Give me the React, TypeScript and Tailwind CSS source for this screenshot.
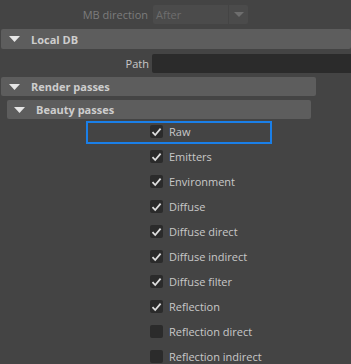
import React from "react";

const Tri = () => (
  <svg width="11" height="6" viewBox="0 0 11 6" className="shrink-0">
    <polygon points="0,0 11,0 5.5,6" fill="#e6e6e6" />
  </svg>
);

const Check = ({ on }: { on: boolean }) => (
  <div className="w-[13px] h-[13px] rounded-[2px] bg-[#2b2b2b] flex items-center justify-center shrink-0">
    {on && (
      <svg width="11" height="10" viewBox="0 0 11 10">
        <path d="M1.5 5.2 L4.2 8 L9.6 1.6" stroke="#e0e0e0" strokeWidth="1.8" fill="none" />
      </svg>
    )}
  </div>
);

const items: [string, boolean][] = [
  ["Raw", true],
  ["Emitters", true],
  ["Environment", true],
  ["Diffuse", true],
  ["Diffuse direct", true],
  ["Diffuse indirect", true],
  ["Diffuse filter", true],
  ["Reflection", true],
  ["Reflection direct", false],
  ["Reflection indirect", false],
];

export default function App() {
  return (
    <div
      className="w-[351px] h-[364px] overflow-hidden bg-[#444444] text-[11px] leading-none"
      style={{ fontFamily: '"Open Sans", "DejaVu Sans", sans-serif' }}
    >
      <div className="flex items-start pt-[5px] h-[29px]">
        <div className="w-[149px] pr-[1px] text-right text-[#7c7c7c] pt-[4px]">MB direction</div>
        <div className="ml-[4px] w-[95px] h-[19px] rounded-[2px] bg-[#4b4b4b] flex">
          <div className="flex-1 pl-[3px] pt-[4px] text-[#6e6e6e]">After</div>
          <div className="w-[20px] h-full border-l border-[#444444] flex items-center justify-center">
            <svg width="10" height="5" viewBox="0 0 10 5">
              <polygon points="0,0 10,0 5,5" fill="#6e6e6e" />
            </svg>
          </div>
        </div>
      </div>
      <div className="ml-[1px] h-[20px] rounded-[2px] bg-[#5d5d5d] flex items-center pl-[8px] gap-[11px]">
        <Tri />
        <span className="font-bold text-[#cdcdcd]">Local DB</span>
      </div>
      <div className="flex items-center mt-[5px] h-[19px]">
        <div className="w-[149px] text-right text-[#c8c8c8]">Path</div>
        <div className="ml-[3px] flex-1 h-full bg-[#2b2b2b] rounded-l-[2px]" />
      </div>
      <div className="ml-[1px] mt-[4px] w-[315px] h-[19px] rounded-[2px] bg-[#5d5d5d] flex items-center pl-[8px] gap-[11px]">
        <Tri />
        <span className="font-bold text-[#cdcdcd]">Render passes</span>
      </div>
      <div className="ml-[7px] mt-[4px] w-[304px] h-[19px] rounded-[2px] bg-[#5d5d5d] flex items-center pl-[7px] gap-[11px]">
        <Tri />
        <span className="font-bold text-[#cdcdcd]">Beauty passes</span>
      </div>
      <div className="flex flex-col">
        {items.map(([label, on], i) => (
          <div key={label} className="h-[25px] flex items-center relative">
            {i === 0 && (
              <div className="absolute left-[86px] top-[2px] w-[186px] h-[23px] border-2 border-[#1a7fe8]" />
            )}
            <div className="ml-[150px] flex items-center gap-[6px]">
              <Check on={on} />
              <span className="text-[#c8c8c8]">{label}</span>
            </div>
          </div>
        ))}
      </div>
    </div>
  );
}
